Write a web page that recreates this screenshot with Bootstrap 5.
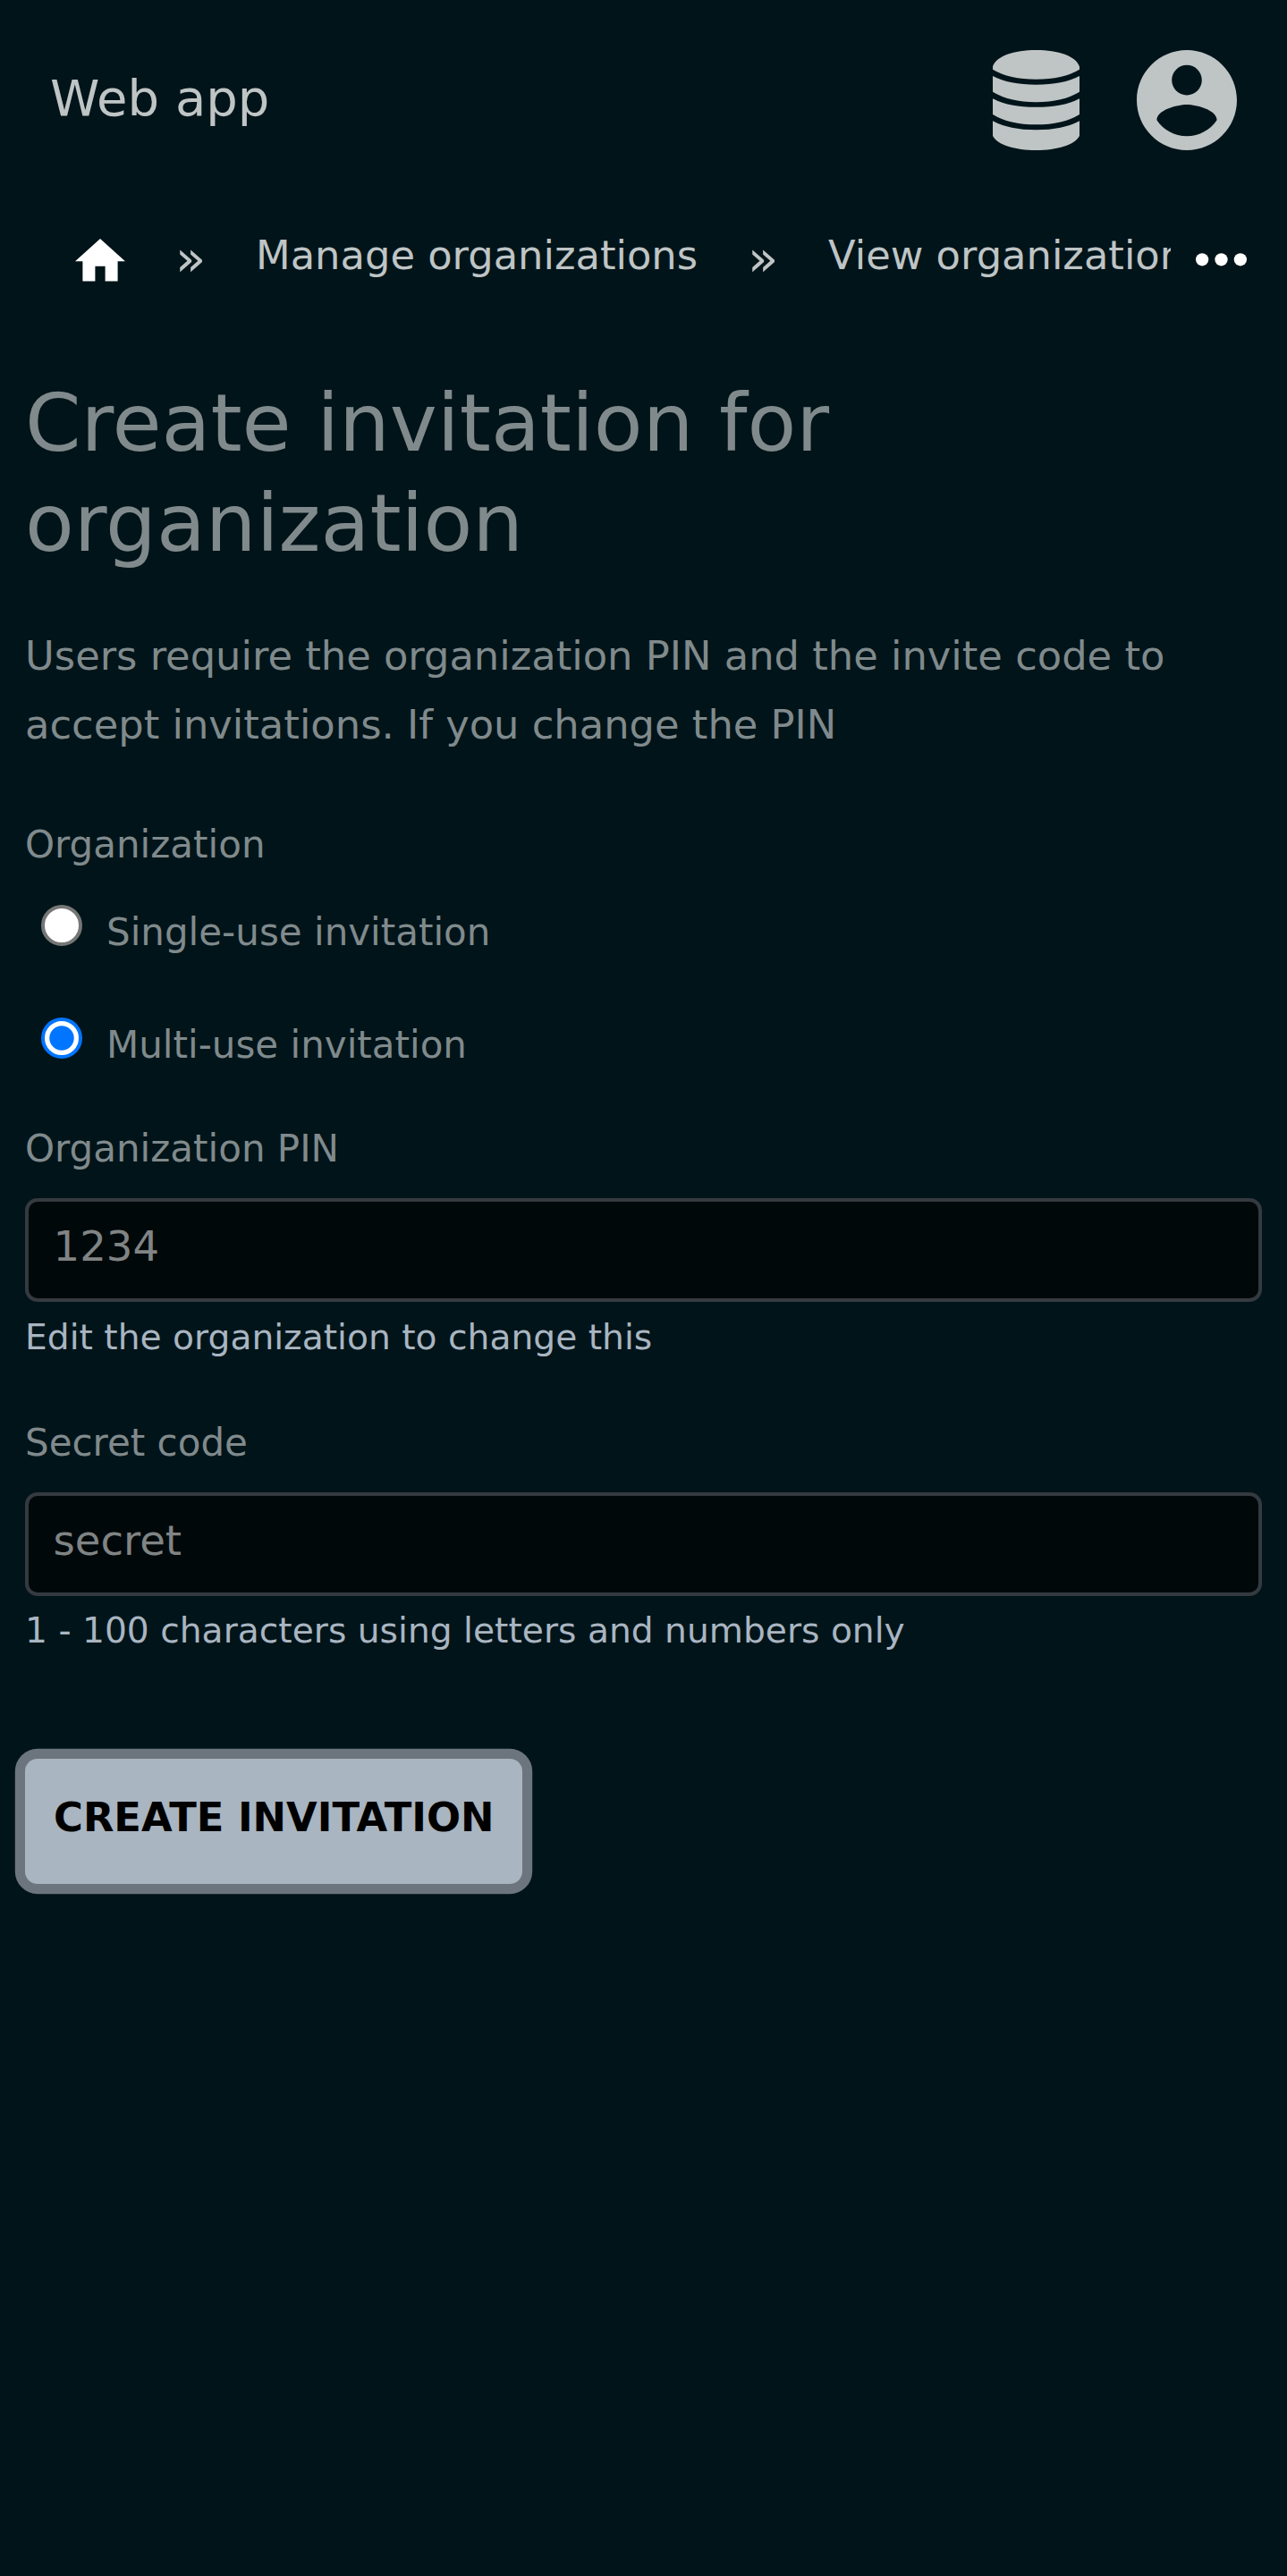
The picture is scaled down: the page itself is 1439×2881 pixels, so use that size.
<!DOCTYPE html>
<html lang="en">
<head>
<meta charset="utf-8">
<title>Create invitation for organization</title>
<link rel="stylesheet" href="https://cdn.jsdelivr.net/npm/bootstrap@5.3.0/dist/css/bootstrap.min.css">
<style>
  body { background: #001419; color: #808a8c; font-family: "DejaVu Sans", sans-serif; min-height: 2881px; overflow-x: hidden; }
  .topbar { height: 224px; padding: 0 56px; color: #bfc4c5; }
  .brand { font-size: 56px; line-height: 84px; color: inherit; padding-bottom: 4px; }
  .tools { gap: 56px; }
  .tool { width: 112px; height: 112px; color: inherit; }
  .tool-db { padding-right: 1px; }
  svg { display: block; fill: currentColor; }
  .crumbs { height: 132px; color: #bfc4c5; padding-right: 45px; }
  .trail { width: 1309px; padding-left: 84px; height: 132px; }
  .trail a { font-size: 44.8px; line-height: 78px; padding-top: 23px; color: inherit; }
  .trail .home { padding-top: 43px; color: #fff; }
  .sep { font-size: 56px; line-height: 78px; padding-top: 26px; width: 34px; margin: 0 56px; }
  .more { padding-top: 59px; color: #fff; }
  main { padding: 61px 28px 0; }
  h1 { font-size: 89.6px; line-height: 112px; margin: 0 0 54px; font-weight: 400; max-width: 1200px; }
  .intro { font-size: 44.8px; line-height: 77px; margin: 0 0 61px; }
  .field-label { font-size: 42px; line-height: 70px; margin: 0; display: block; }
  .group-label { margin-bottom: 28px; }
  .choice { height: 126px; padding-left: 17.5px; font-size: 42px; line-height: 70px; }
  .choice-last { height: 116px; }
  .choice input { appearance: none; width: 46px; height: 46px; margin: 3.5px 27.5px 0 0; flex: none; border: 4px solid #767676; border-radius: 50%; background: #fff; }
  .choice input:checked { border-color: #0075ff; background: radial-gradient(circle, #0075ff 13.2px, #fff 14.2px); }
  .form-control, .form-control:focus { height: 116px; margin-top: 20px; background: #00080a; border: 4px solid #343a40; border-radius: 14px; color: #808484; font-size: 46.6px; line-height: 70px; padding: 12px 27.5px 20px; box-shadow: none; }
  .form-text { font-size: 39.2px; line-height: 60px; margin: 9.5px 0 53px; color: #a9b5c1; }
  .submit, .submit:hover { margin-top: 60px; height: 140px; padding: 0 32px 8px; border: 0; border-radius: 14px; background: #a9b5c1; color: #000; font-size: 44.8px; font-weight: 700; box-shadow: 0 0 0 11.2px #6c757d; }
</style>
</head>
<body>
<header class="topbar d-flex align-items-center justify-content-between">
  <a class="brand text-decoration-none" href="#">Web app</a>
  <div class="tools d-flex">
    <a class="tool tool-db d-flex justify-content-center" href="#" aria-label="Organizations">
      <svg width="97" height="112" viewBox="0 0 290 335"><path d="M0 55C12 20 70 0 145 0S278 20 290 55V65Q235 98 145 98T0 65ZM0 87Q55 116 145 116T290 87V140Q235 174 145 174T0 140ZM0 162Q55 191 145 191T290 162V215Q235 249 145 249T0 215ZM0 237Q55 267 145 267T290 237V287C275 317 215 335 145 335S15 317 0 287Z"/></svg>
    </a>
    <a class="tool" href="#" aria-label="Account">
      <svg width="112" height="112" viewBox="2 2 20 20"><path d="M12 2C6.48 2 2 6.48 2 12s4.48 10 10 10 10-4.48 10-10S17.52 2 12 2zm0 3c1.66 0 3 1.34 3 3s-1.34 3-3 3-3-1.34-3-3 1.34-3 3-3zm0 14.2c-2.5 0-4.71-1.28-6-3.22.03-1.99 4-3.08 6-3.08 1.99 0 5.97 1.09 6 3.08-1.29 1.94-3.5 3.22-6 3.22z"/></svg>
    </a>
  </div>
</header>
<nav class="crumbs d-flex justify-content-between" aria-label="breadcrumb">
  <div class="trail d-flex overflow-hidden text-nowrap flex-shrink-0">
    <a class="home" href="#" aria-label="Home"><svg width="56" height="47.6" viewBox="2 3 20 17"><path d="M10 20v-6h4v6h5v-8h3L12 3 2 12h3v8z"/></svg></a>
    <span class="sep flex-shrink-0">»</span>
    <a class="text-decoration-none" href="#">Manage organizations</a>
    <span class="sep flex-shrink-0">»</span>
    <a class="text-decoration-none" href="#">View organization</a>
  </div>
  <a class="more" href="#" aria-label="More"><svg width="57" height="14.5" viewBox="4 10 16 4"><circle cx="6" cy="12" r="2"/><circle cx="12" cy="12" r="2"/><circle cx="18" cy="12" r="2"/></svg></a>
</nav>
<main>
  <h1>Create invitation for organization</h1>
  <p class="intro">Users require the organization PIN and the invite code to accept invitations. If you change the PIN</p>
  <form>
    <div class="field-label group-label">Organization</div>
    <label class="choice d-flex align-items-start"><input type="radio" name="kind">Single-use invitation</label>
    <label class="choice choice-last d-flex align-items-start"><input type="radio" name="kind" checked>Multi-use invitation</label>
    <label class="field-label" for="pin">Organization PIN</label>
    <input class="form-control" id="pin" value="1234">
    <div class="form-text">Edit the organization to change this</div>
    <label class="field-label" for="code">Secret code</label>
    <input class="form-control" id="code" value="secret">
    <div class="form-text">1 - 100 characters using letters and numbers only</div>
    <button class="btn submit text-uppercase" type="button">Create invitation</button>
  </form>
</main>
<script src="https://cdn.jsdelivr.net/npm/bootstrap@5.3.0/dist/js/bootstrap.bundle.min.js"></script>
</body>
</html>
